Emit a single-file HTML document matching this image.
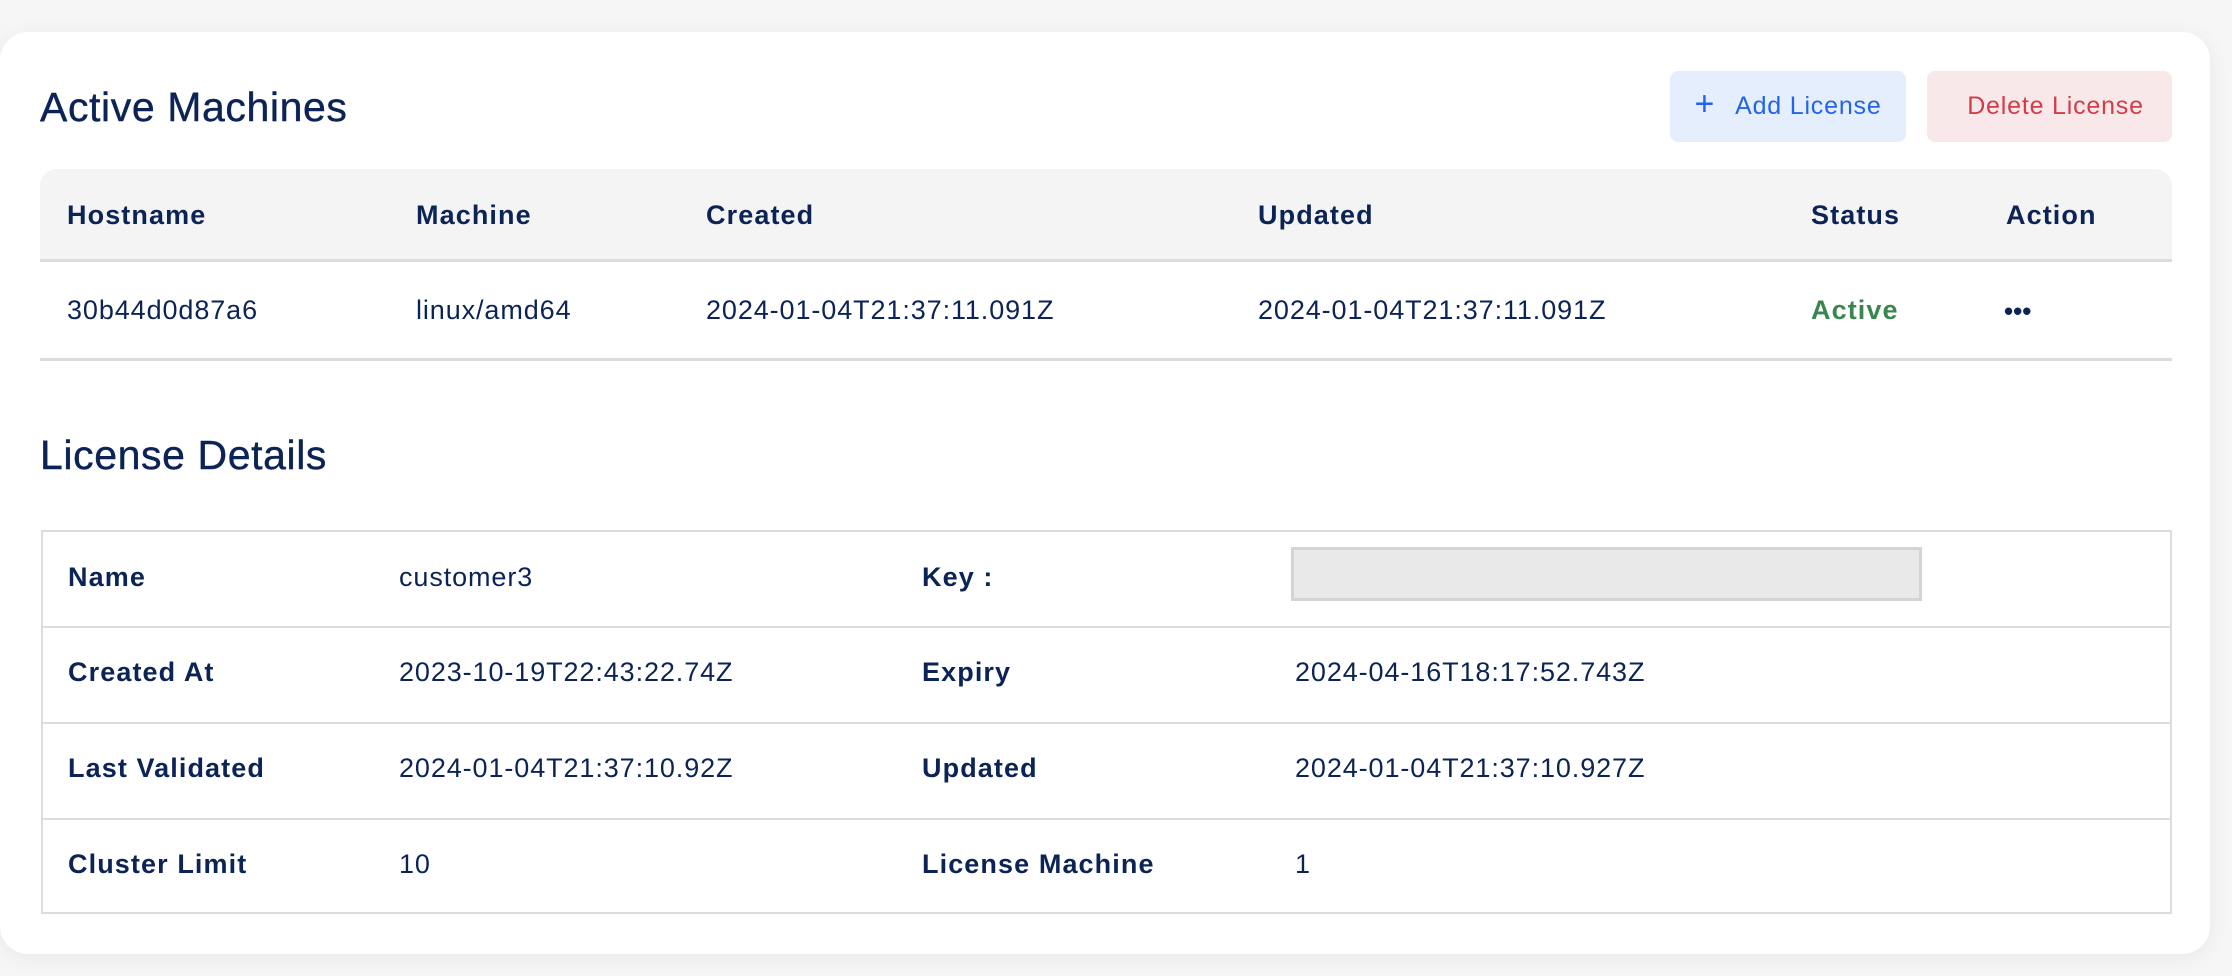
<!DOCTYPE html>
<html><head><meta charset="utf-8"><style>
*{box-sizing:border-box;margin:0;padding:0}
body{width:2232px;height:976px;background:#f6f6f6;font-family:"Liberation Sans",sans-serif;color:#0c2356;position:relative;overflow:hidden}
.card{position:absolute;left:0;top:32px;width:2210px;height:922px;background:#fff;border-radius:28px;box-shadow:0 4px 24px rgba(0,0,0,0.06)}
.abs{position:absolute;white-space:nowrap}
h2{position:absolute;font-weight:400;font-size:41px;letter-spacing:0.6px;-webkit-text-stroke:0.4px #0c2356}
.btn{position:absolute;top:39px;height:71px;border-radius:8px;font-size:25px;letter-spacing:0.8px;display:flex;align-items:center;justify-content:center}
.th{position:absolute;left:40px;width:2132px;height:93px;background:#f4f4f4;border-radius:17px 17px 0 0;border-bottom:3px solid #dcdcdc}
.b{font-weight:700;font-size:27px;letter-spacing:1.1px}
.t{font-size:27px;letter-spacing:0.9px}
.grid{position:absolute;left:41px;width:2131px;height:384px;border:2px solid #dcdcdc}
.grid .row{position:absolute;left:0;width:100%;border-top:2px solid #dcdcdc}
</style></head><body>
<div class="card">
<h2 style="left:40px;top:52px">Active Machines</h2>
<div class="btn" style="left:1670px;width:236px;background:#e5eefc;color:#2563eb"><span style="font-size:34px;font-weight:300;margin-right:20px;margin-top:-4px">+</span>Add License</div>
<div class="btn" style="left:1927px;width:245px;background:#f8e8e9;color:#d23d48;padding-left:12px">Delete License</div>
<div class="th" style="top:137px"></div>
<div class="abs b" style="left:67px;top:168px">Hostname</div>
<div class="abs b" style="left:416px;top:168px">Machine</div>
<div class="abs b" style="left:706px;top:168px">Created</div>
<div class="abs b" style="left:1258px;top:168px">Updated</div>
<div class="abs b" style="left:1811px;top:168px">Status</div>
<div class="abs b" style="left:2006px;top:168px">Action</div>
<div class="abs t" style="left:67px;top:263px">30b44d0d87a6</div>
<div class="abs t" style="left:416px;top:263px">linux/amd64</div>
<div class="abs t" style="left:706px;top:263px">2024-01-04T21:37:11.091Z</div>
<div class="abs t" style="left:1258px;top:263px">2024-01-04T21:37:11.091Z</div>
<div class="abs b" style="left:1811px;top:263px;color:#3b8650">Active</div>
<div class="abs b" style="left:2004px;top:264px;font-size:26px;letter-spacing:0">•••</div>
<div class="abs" style="left:40px;top:326px;width:2132px;border-top:3px solid #dcdcdc"></div>
<h2 style="left:40px;top:400px">License Details</h2>
<div class="grid" style="top:498px">
<div class="row" style="top:94px"></div>
<div class="row" style="top:190px"></div>
<div class="row" style="top:286px"></div>
</div>
<div class="abs b" style="left:68px;top:530px">Name</div>
<div class="abs t" style="left:399px;top:530px">customer3</div>
<div class="abs b" style="left:922px;top:530px">Key :</div>
<div class="abs" style="left:1291px;top:515px;width:631px;height:54px;background:#e9e9e9;border:3px solid #d4d4d4"></div>
<div class="abs b" style="left:68px;top:625px">Created At</div>
<div class="abs t" style="left:399px;top:625px">2023-10-19T22:43:22.74Z</div>
<div class="abs b" style="left:922px;top:625px">Expiry</div>
<div class="abs t" style="left:1295px;top:625px">2024-04-16T18:17:52.743Z</div>
<div class="abs b" style="left:68px;top:721px">Last Validated</div>
<div class="abs t" style="left:399px;top:721px">2024-01-04T21:37:10.92Z</div>
<div class="abs b" style="left:922px;top:721px">Updated</div>
<div class="abs t" style="left:1295px;top:721px">2024-01-04T21:37:10.927Z</div>
<div class="abs b" style="left:68px;top:817px">Cluster Limit</div>
<div class="abs t" style="left:399px;top:817px">10</div>
<div class="abs b" style="left:922px;top:817px">License Machine</div>
<div class="abs t" style="left:1295px;top:817px">1</div>
</div>
</body></html>
